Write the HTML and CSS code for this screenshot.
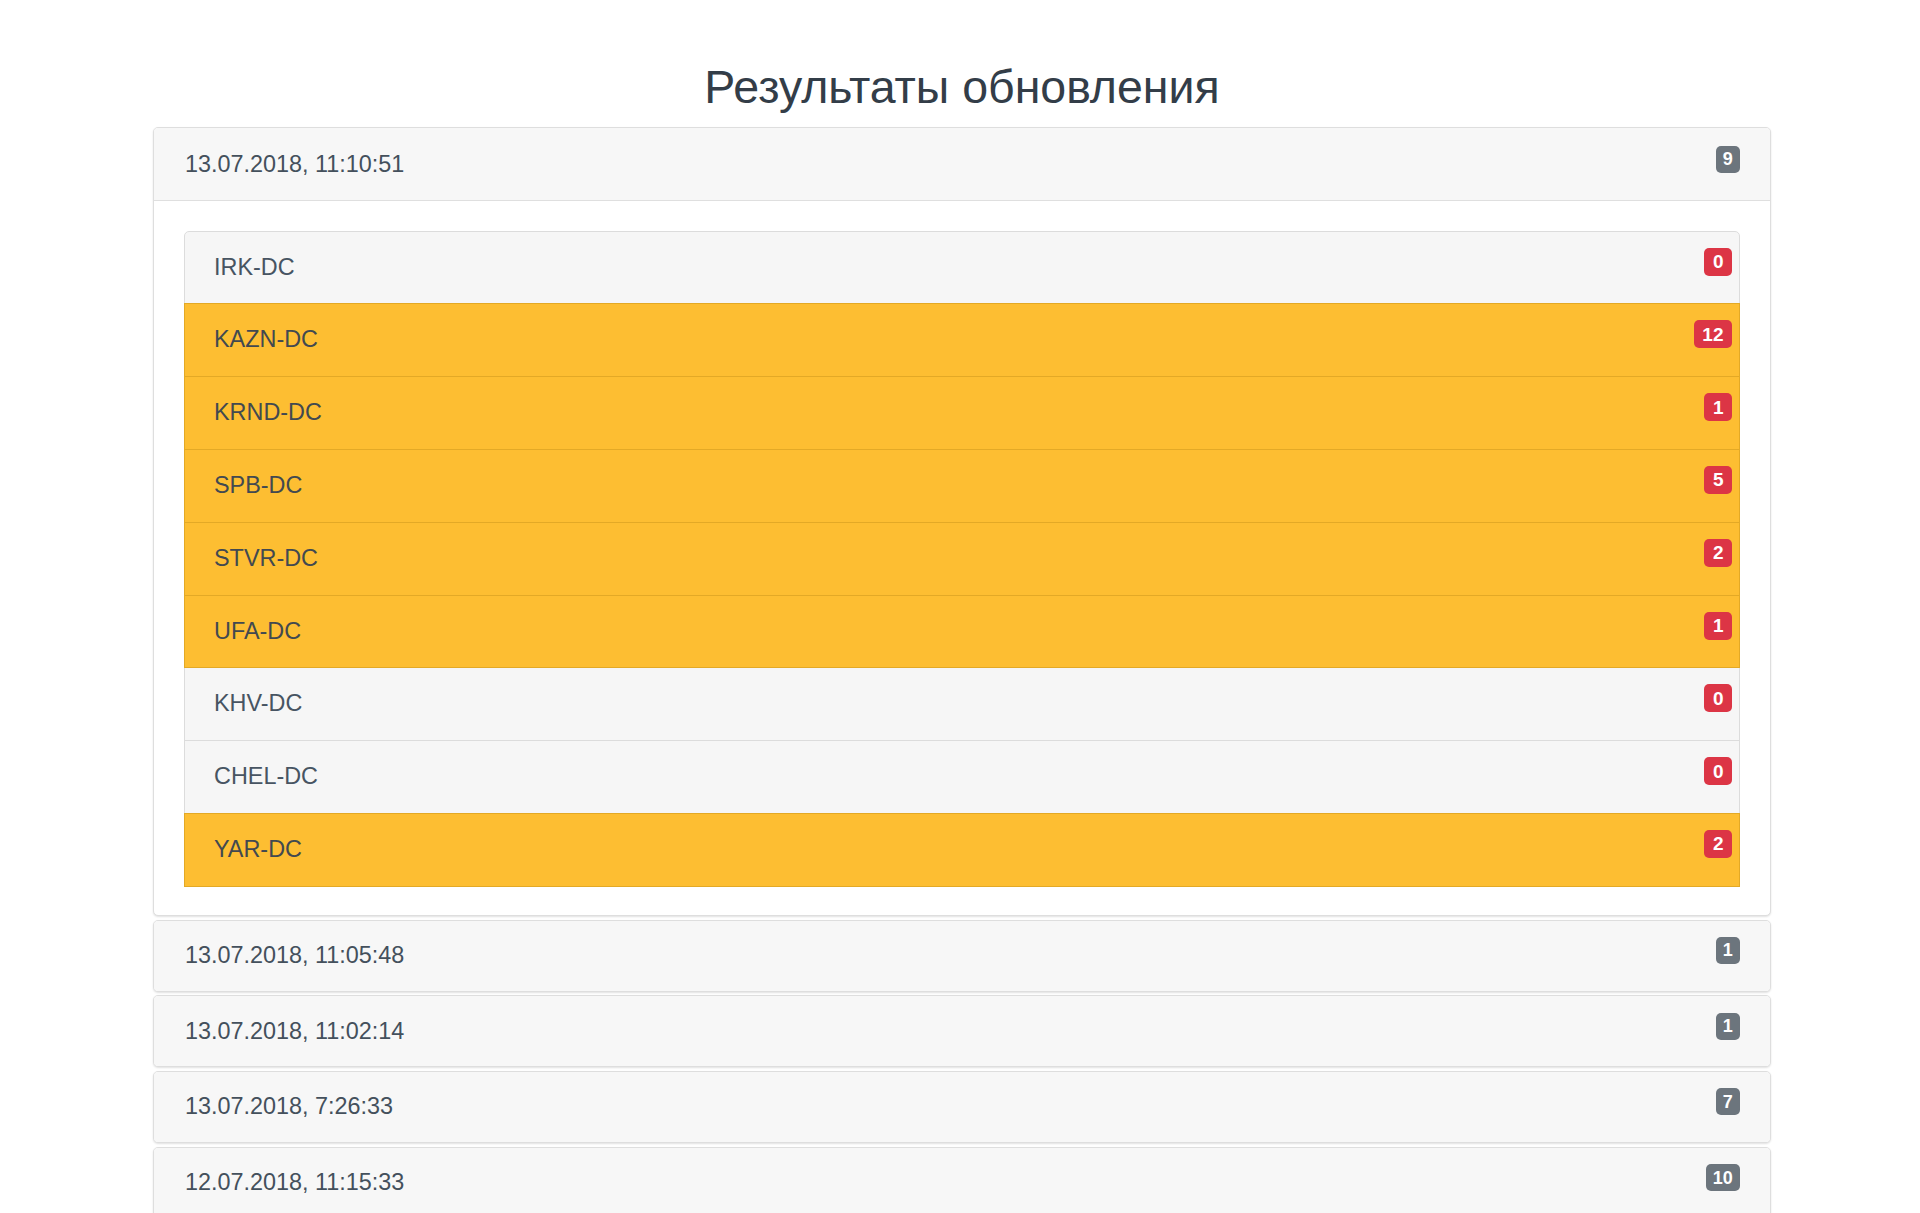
FILE: index.html
```html
<!DOCTYPE html>
<html lang="ru">
<head>
<meta charset="utf-8">
<title>Результаты обновления</title>
<link rel="stylesheet" href="styles.css">
</head>
<body>
<div class="page">
  <h1 class="title">Результаты обновления</h1>

  <div class="card">
    <div class="card-header open">
      <span class="date">13.07.2018, 11:10:51</span>
      <span class="badge badge-gray">9</span>
    </div>
    <div class="card-body">
      <ul class="list">
        <li class="item"><span>IRK-DC</span><span class="badge badge-red">0</span></li>
        <li class="item warn"><span>KAZN-DC</span><span class="badge badge-red">12</span></li>
        <li class="item warn"><span>KRND-DC</span><span class="badge badge-red">1</span></li>
        <li class="item warn"><span>SPB-DC</span><span class="badge badge-red">5</span></li>
        <li class="item warn"><span>STVR-DC</span><span class="badge badge-red">2</span></li>
        <li class="item warn"><span>UFA-DC</span><span class="badge badge-red">1</span></li>
        <li class="item"><span>KHV-DC</span><span class="badge badge-red">0</span></li>
        <li class="item"><span>CHEL-DC</span><span class="badge badge-red">0</span></li>
        <li class="item warn"><span>YAR-DC</span><span class="badge badge-red">2</span></li>
      </ul>
    </div>
  </div>

  <div class="card">
    <div class="card-header">
      <span class="date">13.07.2018, 11:05:48</span>
      <span class="badge badge-gray">1</span>
    </div>
  </div>
  <div class="card">
    <div class="card-header">
      <span class="date">13.07.2018, 11:02:14</span>
      <span class="badge badge-gray">1</span>
    </div>
  </div>
  <div class="card">
    <div class="card-header">
      <span class="date">13.07.2018, 7:26:33</span>
      <span class="badge badge-gray">7</span>
    </div>
  </div>
  <div class="card">
    <div class="card-header">
      <span class="date">12.07.2018, 11:15:33</span>
      <span class="badge badge-gray">10</span>
    </div>
  </div>
</div>
</body>
</html>
```

FILE: styles.css
```css
* { box-sizing: border-box; }

html, body {
  margin: 0;
  padding: 0;
  background: #ffffff;
}

body {
  font-family: "Liberation Sans", Arial, sans-serif;
  font-size: 23.4px;
  color: #44505c;
}

.page {
  width: 1618px;
  margin: 0 0 0 153px;
  padding-top: 59px;
}

.title {
  margin: 0 0 10px;
  font-size: 46.5px;
  font-weight: 400;
  line-height: 57.6px;
  text-align: center;
  color: #333d48;
}

.card {
  background: #ffffff;
  border: 1px solid #dedede;
  border-radius: 5px;
  margin-bottom: 3.8px;
  box-shadow: 0 1px 2px rgba(0, 0, 0, 0.12);
  overflow: hidden;
}

.card-header {
  display: flex;
  justify-content: space-between;
  align-items: flex-start;
  background: #f7f7f7;
  padding: 16.2px 30px 17.8px 31px;
  line-height: 36px;
}

.card-header.open {
  padding: 18px 30px 18px 31px;
  border-bottom: 1px solid #dfdfdf;
}

.card-body {
  padding: 30px 30px 28px;
}

.list {
  list-style: none;
  margin: 0;
  padding: 0;
}

.item {
  display: flex;
  justify-content: space-between;
  align-items: flex-start;
  background: #f6f6f6;
  border: 1px solid #dcdcdc;
  margin-bottom: -1px;
  padding: 18px 7px 18px 29px;
  line-height: 35.8px;
  color: #475462;
}

.item:first-child {
  border-top-left-radius: 5px;
  border-top-right-radius: 5px;
}

.item:last-child {
  margin-bottom: 0;
}

.item.warn {
  background: #fdbe32;
  border-color: #e3a926;
  color: #424950;
  position: relative;
}

.badge {
  display: inline-block;
  font-weight: 700;
  color: #ffffff;
  line-height: 1;
  border-radius: 5px;
  text-align: center;
  white-space: nowrap;
}

.badge-gray {
  background: #6c757d;
  font-size: 18px;
  padding: 4.5px 7.2px;
}

.badge-red {
  background: #dc3545;
  font-size: 19px;
  padding: 4.5px 8.5px;
  margin-top: -2px;
}
```
